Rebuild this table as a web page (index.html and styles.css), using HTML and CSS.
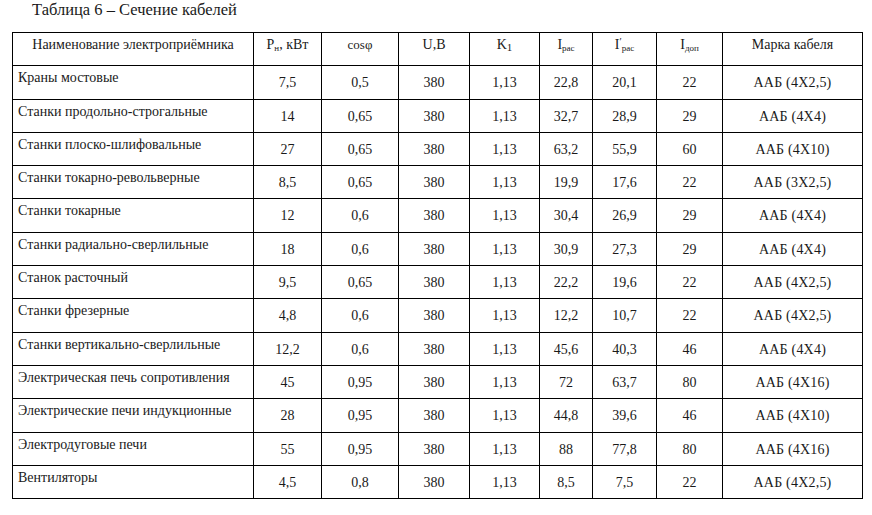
FILE: index.html
```html
<!DOCTYPE html>
<html lang="ru">
<head>
<meta charset="utf-8">
<title>Таблица 6</title>
<link rel="stylesheet" href="styles.css">
</head>
<body>
<div class="caption">Таблица 6 – Сечение кабелей</div>
<table class="grid">
  <colgroup>
    <col class="c1"><col class="c2"><col class="c3"><col class="c4"><col class="c5"><col class="c6"><col class="c7"><col class="c8"><col class="c9">
  </colgroup>
  <thead>
    <tr>
      <th class="name-h">Наименование электроприёмника</th>
      <th>P<sub>н</sub>, кВт</th>
      <th class="small">cosφ</th>
      <th>U,B</th>
      <th>K<sub class="big">1</sub></th>
      <th>I<sub>рас</sub></th>
      <th>I<span class="prime">′</span><sub>рас</sub></th>
      <th>I<sub>доп</sub></th>
      <th>Марка кабеля</th>
    </tr>
  </thead>
  <tbody>
    <tr><td class="name">Краны мостовые</td><td>7,5</td><td>0,5</td><td>380</td><td>1,13</td><td>22,8</td><td>20,1</td><td>22</td><td class="mark">ААБ (4Х2,5)</td></tr>
    <tr><td class="name">Станки продольно-строгальные</td><td>14</td><td>0,65</td><td>380</td><td>1,13</td><td>32,7</td><td>28,9</td><td>29</td><td class="mark">ААБ (4Х4)</td></tr>
    <tr><td class="name">Станки плоско-шлифовальные</td><td>27</td><td>0,65</td><td>380</td><td>1,13</td><td>63,2</td><td>55,9</td><td>60</td><td class="mark">ААБ (4Х10)</td></tr>
    <tr><td class="name">Станки токарно-револьверные</td><td>8,5</td><td>0,65</td><td>380</td><td>1,13</td><td>19,9</td><td>17,6</td><td>22</td><td class="mark">ААБ (3Х2,5)</td></tr>
    <tr><td class="name">Станки токарные</td><td>12</td><td>0,6</td><td>380</td><td>1,13</td><td>30,4</td><td>26,9</td><td>29</td><td class="mark">ААБ (4Х4)</td></tr>
    <tr><td class="name">Станки радиально-сверлильные</td><td>18</td><td>0,6</td><td>380</td><td>1,13</td><td>30,9</td><td>27,3</td><td>29</td><td class="mark">ААБ (4Х4)</td></tr>
    <tr><td class="name">Станок расточный</td><td>9,5</td><td>0,65</td><td>380</td><td>1,13</td><td>22,2</td><td>19,6</td><td>22</td><td class="mark">ААБ (4Х2,5)</td></tr>
    <tr><td class="name">Станки фрезерные</td><td>4,8</td><td>0,6</td><td>380</td><td>1,13</td><td>12,2</td><td>10,7</td><td>22</td><td class="mark">ААБ (4Х2,5)</td></tr>
    <tr><td class="name">Станки вертикально-сверлильные</td><td>12,2</td><td>0,6</td><td>380</td><td>1,13</td><td>45,6</td><td>40,3</td><td>46</td><td class="mark">ААБ (4Х4)</td></tr>
    <tr><td class="name">Электрическая печь сопротивления</td><td>45</td><td>0,95</td><td>380</td><td>1,13</td><td>72</td><td>63,7</td><td>80</td><td class="mark">ААБ (4Х16)</td></tr>
    <tr><td class="name">Электрические печи индукционные</td><td>28</td><td>0,95</td><td>380</td><td>1,13</td><td>44,8</td><td>39,6</td><td>46</td><td class="mark">ААБ (4Х10)</td></tr>
    <tr><td class="name">Электродуговые печи</td><td>55</td><td>0,95</td><td>380</td><td>1,13</td><td>88</td><td>77,8</td><td>80</td><td class="mark">ААБ (4Х16)</td></tr>
    <tr><td class="name">Вентиляторы</td><td>4,5</td><td>0,8</td><td>380</td><td>1,13</td><td>8,5</td><td>7,5</td><td>22</td><td class="mark">ААБ (4Х2,5)</td></tr>
  </tbody>
</table>
</body>
</html>
```
FILE: styles.css
```css
html, body {
  margin: 0;
  padding: 0;
  background: #ffffff;
}

body {
  font-family: "Liberation Serif", "Times New Roman", Tinos, serif;
  color: #1a1a1a;
}

.caption {
  font-size: 16.5px;
  line-height: 18px;
  padding: 1px 0 0 32px;
  height: 32px;
  box-sizing: border-box;
}

.grid {
  margin-left: 12px;
  border-collapse: collapse;
  table-layout: fixed;
  width: 850px;
  font-size: 14px;
}

.c1 { width: 241px; }
.c2 { width: 68px; }
.c3 { width: 77px; }
.c4 { width: 71px; }
.c5 { width: 70px; }
.c6 { width: 53px; }
.c7 { width: 64px; }
.c8 { width: 66px; }
.c9 { width: 140px; }

.grid th,
.grid td {
  border: 1px solid #000;
  height: 33.3px;
  padding: 0;
  box-sizing: border-box;
  text-align: center;
  line-height: 16px;
}

.grid th {
  font-weight: normal;
  vertical-align: top;
  padding-top: 4px;
}

.grid td {
  vertical-align: top;
  padding-top: 9px;
}

.grid td.name {
  text-align: left;
  padding: 4px 0 0 5px;
}

.grid td.mark {
  letter-spacing: 0.2px;
}

.grid th sub {
  font-size: 9px;
  vertical-align: -2px;
  line-height: 0;
}

.grid th sub.big {
  font-size: 11px;
}

.grid th .prime {
  font-size: 10px;
  vertical-align: 4px;
  line-height: 0;
}

.grid th.small {
  font-size: 13px;
}
```
